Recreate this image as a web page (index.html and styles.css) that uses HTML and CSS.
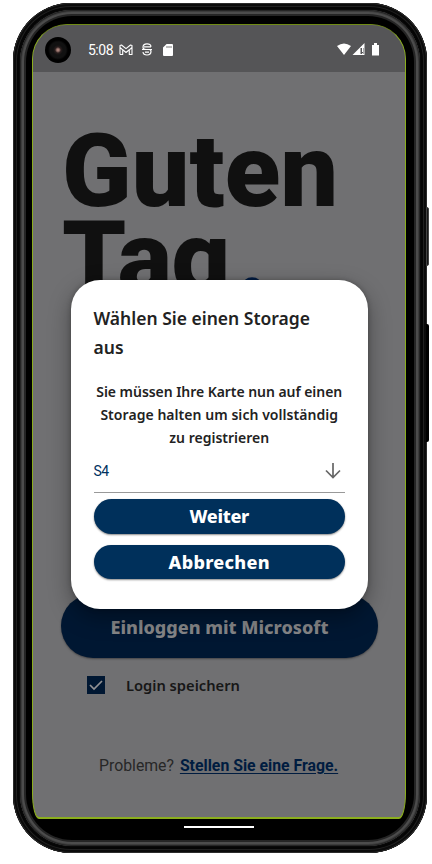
FILE: index.html
```html
<!DOCTYPE html>
<html lang="de">
<head>
<meta charset="utf-8">
<title>Guten Tag</title>
<link rel="stylesheet" href="styles.css">
</head>
<body>
<div class="phone">
  <i class="key power"></i><i class="key volume"></i>
  <div class="metal"><div class="bezel">
    <main class="screen">
      <header class="status">
        <i class="camera"></i>
        <span class="time">5:08</span>
        <svg class="mail" width="14" height="12" viewBox="0 0 14 12"><path d="M1 10.500V1.500L2.500 1 7 4.700 11.500 1 13 1.500V10.500H10.300V5.800L7 8.500 3.700 5.800V10.500H1M3.700 5.800 1 3.500M10.300 5.800 13 3.500" fill="none" stroke="#fff" stroke-width="1.100" stroke-linejoin="round"/></svg>
        <svg class="face" width="10" height="13" viewBox="0 0 10 13"><path d="M9 3.800C9 1.700 7.300.9 5 .9S1 1.900 1 4.200C1 6 2 6.500 4 6.500H6.500C8.200 6.500 9 7 9 8.300 9 10.700 7.500 12 5 12 2.700 12 1.200 11 1 9M0 6.500H10M2 3.800H9M3 9.200H7" fill="none" stroke="#fff" stroke-width="1.200"/></svg>
        <svg class="card" width="10" height="12" viewBox="0 0 10 12"><path fill="#fff" d="M3.600 0H9Q10 0 10 1V11Q10 12 9 12H1Q0 12 0 11V3.600Z"/><path d="M4 2V4M6 2V4M8 2V4" stroke="#777"/></svg>
        <span class="space"></span>
        <svg width="43" height="13" viewBox="0 0 43 13"><path fill="#fff" d="M0 3Q7-2 14 3L7 12ZM15.500 12 27.500 0V12ZM35 2H37V0H40V2H42V12.500H35Z"/><path fill="#555557" d="M23.500 5H26.500V11H23.500Z"/><path d="M25.500 5V9M25.500 10.200V12" stroke="#fff"/></svg>
      </header>
      <h1><span>Guten</span><span class="tag">Tag<b>.</b></span></h1>
      <button class="login"><span>Einloggen mit Microsoft</span></button>
      <label class="remember"><svg width="18" height="18" viewBox="0 0 18 18"><path fill="#001732" d="M0 0H18V18H0Z"/><path d="M3 9 7 13 15 5" fill="none" stroke="#929294" stroke-width="1.700"/></svg><span>Login speichern</span></label>
      <p class="help">Probleme? <a>Stellen Sie eine Frage.</a></p>
    </main>
    <i class="home"></i>
  </div></div>
  <section class="dialog">
    <h2>Wählen Sie einen Storage<br>aus</h2>
    <p><span class="b1">Sie müssen Ihre Karte nun auf einen</span><br><span class="b2">Storage halten um sich vollständig</span><br><span class="b3">zu registrieren</span></p>
    <div class="select"><span>S4</span><svg width="16" height="16" viewBox="0 0 16 16"><path d="M8 0V14.500M1 7.500 8 14.500 15 7.500" fill="none" stroke="#666" stroke-width="1.700"/></svg></div>
    <button class="action"><span class="weiter">Weiter</span></button>
    <button class="action"><span class="cancel">Abbrechen</span></button>
  </section>
</div>
</body>
</html>
```
FILE: styles.css
```css
* { box-sizing: border-box; }
body { margin: 0; width: 432px; height: 864px; overflow: hidden; background: #fff; font-family: "Noto Sans", sans-serif; }
h1, h2, p { margin: 0; }
button { border: 0; padding: 0; font-family: inherit; }
span, a { white-space: nowrap; }
.phone { position: relative; margin: 3px 0 0 13px; width: 414px; height: 850px; padding: 7px; border-radius: 58px; background: #0a0a0a; box-shadow: inset 0 0 0 1px #2b2b2b, inset 0 0 0 3px #0b0b0b, inset 0 0 0 4px #202020, inset 0 0 0 6px #050505; }
.key { position: absolute; left: 413px; width: 3px; background: #171717; border-radius: 0 2px 2px 0; }
.power { top: 204px; height: 59px; border: 1px solid #444; }
.volume { top: 321px; height: 118px; background: #000; }
.metal { height: 836px; padding: 6px; border-radius: 52px; background: #252525; box-shadow: inset 0 0 0 1px #252525, inset 0 0 0 2px #3c3c3c, inset 0 0 0 4px #4c4c4c; }
.bezel { height: 824px; background: #000; border-radius: 46px; padding: 8px 6px 0; }
.screen { height: 795px; width: 374px; border: 1.500px solid #8bae1d; border-top-color: #708b14; border-bottom-width: 2px; border-radius: 35px 35px 7px 7px / 35px 35px 26px 26px; background: #707072; overflow: hidden; }
.status { height: 47px; background: #555557; display: flex; align-items: center; padding: 2px 25px 0 12px; color: #fff; }
.camera { width: 26px; height: 26px; border-radius: 50%; background: radial-gradient(circle, #a78078 0 1px, #281d1d 3px, #111 5px, #111 8px, #000 10px); }
.time { font: 14px/20px Roboto, sans-serif; margin-left: 17px; width: 31px; letter-spacing: -.5px; }
.face { margin-left: 9px; }
.card { margin-left: 11px; }
.space { flex: 1; }
h1 { font: 900 102px/87px Roboto, sans-serif; letter-spacing: .2px; color: #101010; padding: 56px 0 0 29px; height: 244px; white-space: nowrap; }
h1 > span { display: block; height: 87px; line-height: 87px; }
h1 .tag { letter-spacing: -.3px; }
h1 b { font-weight: 900; color: #001b43; margin-left: 7px; }
.login { display: block; width: 317px; height: 64px; margin: 278px 0 0 28px; border-radius: 32px; background: #001732; color: #858587; font-size: 18px; font-weight: 800; padding-top: 1px; box-shadow: 0 1px 2px #454547; }
.remember { display: flex; align-items: center; height: 24px; margin: 15px 0 0 54px; gap: 21px; color: #171717; font-size: 14.700px; font-weight: 600; }
.help { margin: 59px 0 0 66px; font: 15.800px/20px Roboto, sans-serif; color: #272727; white-space: nowrap; }
.help a { color: #001c40; font-weight: 700; text-decoration: underline; text-underline-offset: 2px; margin-left: 2px; }
.home { display: block; margin: 7px auto 0; width: 70px; height: 2px; background: #fff; transform: translateX(-1px); }
.dialog { position: absolute; left: 57.500px; top: 277px; width: 297.500px; height: 329px; padding: 24px 23px 0; border-radius: 29px; background: #fff; color: #222; box-shadow: 0 8px 22px rgba(0,0,0,.36), 0 0 5px rgba(0,0,0,.25); }
.dialog h2 { font-size: 17.500px; font-weight: 600; line-height: 28.500px; }
.dialog p { margin-top: 19px; font-size: 14px; font-weight: 600; line-height: 23px; text-align: center; }
.b1 { letter-spacing: -.05px; }
.b2 { letter-spacing: .05px; }
.select { height: 44px; border-bottom: 1px solid #999; display: flex; justify-content: space-between; padding: 14px 4px 0 0; color: #00315f; font: 14px/16px Roboto, sans-serif; }
.select span { letter-spacing: -.5px; }
.action { display: block; width: 251.500px; height: 34.500px; margin: 6px 0 11px; border-radius: 18px; background: #00305b; color: #fff; font-size: 18px; font-weight: 800; box-shadow: 0 1px 2px #888; line-height: 34px; }
.weiter { letter-spacing: -.3px; }
.cancel { letter-spacing: .3px; }
.action + .action { margin-top: 0; }
```
